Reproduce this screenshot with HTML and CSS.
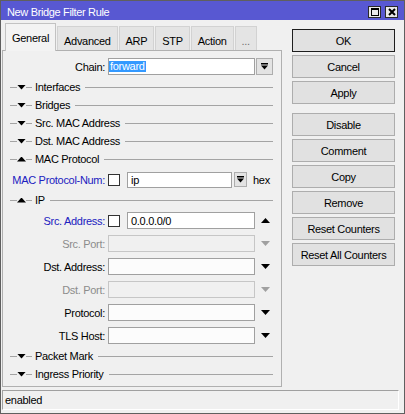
FILE: index.html
```html
<!DOCTYPE html>
<html>
<head>
<meta charset="utf-8">
<link rel="stylesheet" href="styles.css">
</head>
<body>
<div class="window">
  <div class="titlebar">
    <span class="title">New Bridge Filter Rule</span>
    <div class="tb-btns">
      <span class="tb-btn"><svg width="10" height="10" viewBox="0 0 10 10"><rect x="1.5" y="1.5" width="7" height="7" fill="none" stroke="#000"/><rect x="1" y="1" width="8" height="2" fill="#000"/></svg></span>
      <span class="tb-btn"><svg width="10" height="10" viewBox="0 0 10 10"><path d="M2 2L8 8M8 2L2 8" stroke="#000" stroke-width="2"/></svg></span>
    </div>
  </div>
  <div class="main">
    <div class="left">
      <div class="tabs">
        <div class="tab active">General</div>
        <div class="tab">Advanced</div>
        <div class="tab">ARP</div>
        <div class="tab">STP</div>
        <div class="tab">Action</div>
        <div class="tab dim">...</div>
      </div>
      <div class="panel">
        <div class="row">
          <div class="label">Chain:</div>
          <div class="input w-full first"><span class="sel">forward</span></div>
          <div class="dd-btn big"><svg width="7" height="7" viewBox="0 0 7 7"><rect x="0" y="0" width="7" height="1.5" fill="#000"/><path d="M0 2.5H7L3.5 6.5Z" fill="#000"/></svg></div>
        </div>
        <div class="section"><span class="sline dash-l"></span><span class="tri down"></span><span class="sline dash-s"></span><span class="stext">Interfaces</span><span class="sline fill"></span></div>
        <div class="section"><span class="sline dash-l"></span><span class="tri down"></span><span class="sline dash-s"></span><span class="stext">Bridges</span><span class="sline fill"></span></div>
        <div class="section"><span class="sline dash-l"></span><span class="tri down"></span><span class="sline dash-s"></span><span class="stext">Src. MAC Address</span><span class="sline fill"></span></div>
        <div class="section"><span class="sline dash-l"></span><span class="tri down"></span><span class="sline dash-s"></span><span class="stext">Dst. MAC Address</span><span class="sline fill"></span></div>
        <div class="section"><span class="sline dash-l"></span><span class="tri up"></span><span class="sline dash-s"></span><span class="stext">MAC Protocol</span><span class="sline fill"></span></div>
        <div class="row">
          <div class="label blue">MAC Protocol-Num:</div>
          <div class="check"></div>
          <div class="input w-mac">ip</div>
          <div class="dd-btn small"><svg width="7" height="7" viewBox="0 0 7 7"><rect x="0" y="0" width="7" height="1.5" fill="#000"/><path d="M0 2.5H7L3.5 6.5Z" fill="#000"/></svg></div>
          <span class="hex">hex</span>
        </div>
        <div class="section"><span class="sline dash-l"></span><span class="tri up"></span><span class="sline dash-s"></span><span class="stext">IP</span><span class="sline fill"></span></div>
        <div class="row">
          <div class="label blue">Src. Address:</div>
          <div class="check"></div>
          <div class="input w-addr">0.0.0.0/0</div>
          <span class="tri up side"></span>
        </div>
        <div class="row">
          <div class="label gray">Src. Port:</div>
          <div class="input w-full first disabled"></div>
          <span class="tri down side gray-tri"></span>
        </div>
        <div class="row">
          <div class="label">Dst. Address:</div>
          <div class="input w-full first empty"></div>
          <span class="tri down side"></span>
        </div>
        <div class="row">
          <div class="label gray">Dst. Port:</div>
          <div class="input w-full first disabled"></div>
          <span class="tri down side gray-tri"></span>
        </div>
        <div class="row">
          <div class="label">Protocol:</div>
          <div class="input w-full first empty"></div>
          <span class="tri down side"></span>
        </div>
        <div class="row">
          <div class="label">TLS Host:</div>
          <div class="input w-full first empty"></div>
          <span class="tri down side"></span>
        </div>
        <div class="section"><span class="sline dash-l"></span><span class="tri down"></span><span class="sline dash-s"></span><span class="stext">Packet Mark</span><span class="sline fill"></span></div>
        <div class="section"><span class="sline dash-l"></span><span class="tri down"></span><span class="sline dash-s"></span><span class="stext">Ingress Priority</span><span class="sline fill"></span></div>
      </div>
    </div>
    <div class="actions">
      <div class="btn default">OK</div>
      <div class="btn">Cancel</div>
      <div class="btn">Apply</div>
      <div class="btn gap">Disable</div>
      <div class="btn">Comment</div>
      <div class="btn">Copy</div>
      <div class="btn">Remove</div>
      <div class="btn">Reset Counters</div>
      <div class="btn">Reset All Counters</div>
    </div>
  </div>
  <div class="status">enabled</div>
</div>
</body>
</html>
```
FILE: styles.css
```css
* { box-sizing: border-box; }
body {
  margin: 0;
  font-family: "Liberation Sans", Arial, sans-serif;
  font-size: 11px;
  letter-spacing: -0.3px;
  color: #000;
}
.window {
  width: 405px;
  height: 414px;
  border: 1px solid #5f5f5f;
  background: #f0f0f0;
  display: flex;
  flex-direction: column;
}
.titlebar {
  height: 19px;
  flex: none;
  background: #5858d2;
  color: #fff;
  display: flex;
  align-items: center;
  justify-content: space-between;
  padding: 3px 6px 0 6px;
  letter-spacing: -0.35px;
}
.tb-btns { display: flex; gap: 4px; }
.tb-btn {
  width: 13px;
  height: 12px;
  border: 1px solid #2a2a2a;
  background: #e9e9e9;
  display: flex;
  align-items: center;
  justify-content: center;
}
.main { flex: 1; display: flex; }
.left {
  margin-left: 1px;
  width: 280px;
  display: flex;
  flex-direction: column;
}
.tabs {
  display: flex;
  align-items: flex-end;
  height: 27px;
  margin-top: 3px;
  padding-left: 3px;
  position: relative;
  z-index: 1;
}
.tab {
  height: 24px;
  padding: 4px 6px 0 6px;
  display: flex;
  align-items: center;
  background: #e4e4e4;
  border: 1px solid #d2d2d2;
  border-bottom: none;
  margin-right: 1px;
}
.tab.active {
  height: 28px;
  padding-top: 0;
  margin-bottom: -1px;
  background: #f3f3f3;
  border-color: #c2c2c2;
}
.tab.dim { color: #707070; }
.panel {
  height: 337px;
  border: 1px solid #b0b0b0;
  background: #f0f0f0;
  padding-top: 4px;
}
.row {
  height: 23px;
  display: flex;
  align-items: center;
}
.label {
  width: 102px;
  flex: none;
  text-align: right;
  margin-right: 3px;
  white-space: nowrap;
}
.label.blue { color: #2020c0; }
.label.gray { color: #8c8c8c; }
.input {
  height: 17px;
  flex: none;
  border: 1px solid #a0a0a0;
  background: #fff;
  display: flex;
  align-items: center;
  padding-left: 3px;
}
.input.first { padding-left: 0; }
.input.empty { background: #fcfcfc; }
.input.disabled { background: #f0f0f0; border-color: #c6c6c6; }
.w-full { width: 147px; }
.w-addr { width: 128px; }
.w-mac { width: 105px; height: 16px; }
.sel {
  background: #3399ff;
  color: #fff;
  line-height: 11px;
  padding: 0 1px;
  margin-left: 0;
}
.check {
  width: 12px;
  height: 12px;
  flex: none;
  border: 1px solid #333;
  background: #fff;
  margin-right: 7px;
}
.dd-btn {
  flex: none;
  border: 1px solid #adadad;
  background: #e3e3e3;
  display: flex;
  align-items: center;
  justify-content: center;
}
.dd-btn.big { width: 17px; height: 17px; margin-left: 1px; }
.dd-btn.small { width: 13px; height: 15px; margin-left: 2px; }
.hex { margin-left: 6px; }
.tri {
  width: 9px;
  height: 5px;
  flex: none;
  background: #000;
}
.tri.down { clip-path: polygon(0 0, 100% 0, 50% 100%); }
.tri.up { clip-path: polygon(50% 0, 100% 100%, 0 100%); }
.tri.side { margin-left: 6px; }
.tri.gray-tri { background: #a0a0a0; }
.section {
  height: 18px;
  display: flex;
  align-items: center;
  margin-left: 7px;
  margin-right: 8px;
}
.sline { height: 1px; background: #a4a4a4; flex: none; }
.dash-l { width: 7px; }
.dash-s { width: 6px; }
.sline.fill { flex: 1; }
.stext { margin-left: 3px; margin-right: 5px; white-space: nowrap; }
.actions {
  margin-left: 10px;
  margin-top: 9px;
  width: 103px;
  display: flex;
  flex-direction: column;
  gap: 3px;
}
.btn {
  height: 23px;
  border: 1px solid #adadad;
  background: #e1e1e1;
  display: flex;
  align-items: center;
  justify-content: center;
  white-space: nowrap;
}
.btn.default { border-color: #1e1e1e; }
.btn.gap { margin-top: 6px; }
.status {
  height: 20px;
  width: 397px;
  flex: none;
  margin: 3px 0 3px 1px;
  border-top: 1px solid #a0a0a0;
  border-left: 1px solid #a0a0a0;
  border-right: 1px solid #fff;
  border-bottom: 1px solid #fff;
  padding-left: 2px;
  display: flex;
  align-items: center;
}
```
